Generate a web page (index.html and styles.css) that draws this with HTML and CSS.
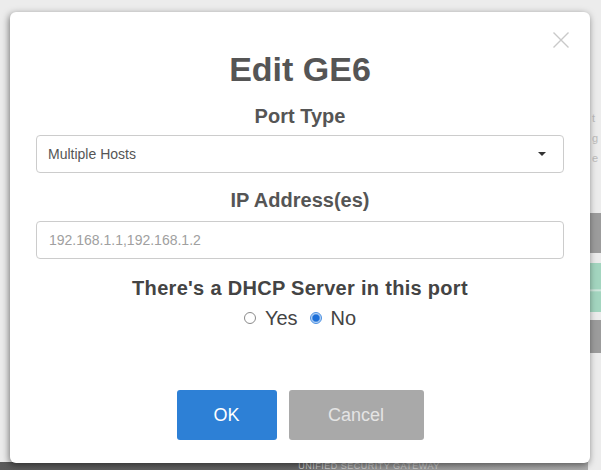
FILE: index.html
```html
<!DOCTYPE html>
<html lang="en">
<head>
    <meta charset="UTF-8">
    <meta name="viewport" content="width=device-width, initial-scale=1.0">
    <title>Edit GE6</title>
    <link rel="stylesheet" href="styles.css">
</head>
<body>
    <div class="page">
        <div class="page-main">
            <div class="footer-bar"><span class="footer-text">UNIFIED SECURITY GATEWAY</span></div>
        </div>
        <div class="page-side">
            <div class="side-text">t<br/>g<br/>e</div>
            <div class="side-block gray"></div>
            <div class="side-block green"></div>
            <div class="side-block gray short"></div>
        </div>
    </div>

    <div id="overlay"></div>

    <div id="popup" class="modal">
        <span class="close">
            <svg width="18" height="16" viewBox="0 0 18 16"><path d="M1.5 0.5 L16.5 15.5 M16.5 0.5 L1.5 15.5" stroke="#c9c9c9" stroke-width="1.4" fill="none"/></svg>
        </span>
        <h1 class="modal-title">Edit GE6</h1>

        <label class="field-label">Port Type</label>
        <div class="select-box">
            <span>Multiple Hosts</span>
            <span class="caret"></span>
        </div>

        <label class="field-label">IP Address(es)</label>
        <input class="text-input" type="text" placeholder="192.168.1.1,192.168.1.2">

        <div class="dhcp-label">There's a DHCP Server in this port</div>
        <div class="radio-row">
            <label class="radio"><span class="dot"></span>Yes</label>
            <label class="radio"><span class="dot checked"></span>No</label>
        </div>

        <div class="buttons">
            <button class="btn btn-ok">OK</button>
            <button class="btn btn-cancel">Cancel</button>
        </div>
    </div>
</body>
</html>
```

FILE: styles.css
```css
html, body {
    margin: 0;
    padding: 0;
}

body {
    width: 601px;
    height: 470px;
    overflow: hidden;
    background-color: #f4f4f4;
    font-family: "Liberation Sans", Arial, sans-serif;
    position: relative;
}

.page {
    display: flex;
    height: 470px;
}

.page-main {
    flex: 1;
    display: flex;
    flex-direction: column;
    justify-content: flex-end;
}

.footer-bar {
    height: 8px;
    background: linear-gradient(to right, #5e5e5e 0, #6b6b6b 300px, #9a9a9a 340px, #b5b5b5 100%);
    display: flex;
    justify-content: center;
}

.footer-text {
    font-size: 9px;
    color: #d8d8d8;
    margin-left: 150px;
    line-height: 8px;
    letter-spacing: 0.5px;
}

.page-side {
    width: 13px;
    display: flex;
    flex-direction: column;
    padding-top: 108px;
}

.side-text {
    font-size: 11px;
    line-height: 20px;
    color: #c4c4c4;
    padding-left: 4px;
    height: 105px;
}

.side-block {
    height: 40px;
    margin-bottom: 10px;
}

.side-block.gray {
    background-color: #a2a2a2;
}

.side-block.green {
    background: linear-gradient(#a9dcc6 0, #a9dcc6 26px, #e6f4ee 27px, #a9dcc6 29px);
    height: 49px;
    margin-bottom: 8px;
}

.side-block.short {
    height: 33px;
}

#overlay {
    position: absolute;
    top: 0;
    left: 0;
    width: 100%;
    height: 100%;
    background-color: rgba(0, 0, 0, 0.03);
}

.modal {
    position: absolute;
    top: 12px;
    left: 10px;
    width: 580px;
    box-sizing: border-box;
    padding: 37px 26px 23px;
    background-color: #fff;
    border-radius: 6px;
    box-shadow: -1px 2px 7px rgba(0, 0, 0, 0.5);
    display: flex;
    flex-direction: column;
    align-items: center;
}

.close {
    position: absolute;
    top: 20px;
    right: 20px;
    display: flex;
}

.modal-title {
    margin: 0;
    font-size: 34px;
    line-height: 40px;
    font-weight: bold;
    color: #555;
}

.field-label {
    margin-top: 15px;
    font-size: 20px;
    line-height: 24px;
    font-weight: bold;
    color: #555;
}

.select-box,
.text-input {
    width: 100%;
    height: 38px;
    box-sizing: border-box;
    border: 1px solid #ccc;
    border-radius: 4px;
    margin-top: 7px;
    font-family: "Liberation Sans", Arial, sans-serif;
}

.select-box {
    display: flex;
    align-items: center;
    justify-content: space-between;
    font-size: 14px;
    color: #555;
    padding: 0 17px 0 11px;
}

.caret {
    width: 0;
    height: 0;
    border-left: 4px solid transparent;
    border-right: 4px solid transparent;
    border-top: 4px solid #333;
}

.text-input {
    margin-top: 9px;
    padding: 0 12px;
    font-size: 14px;
    outline: none;
}

.text-input::placeholder {
    color: #a0a0a0;
}

.dhcp-label {
    margin-top: 17px;
    font-size: 20px;
    line-height: 24px;
    font-weight: bold;
    color: #444;
    letter-spacing: 0.3px;
}

.radio-row {
    display: flex;
    gap: 12px;
    margin-top: 6px;
    font-size: 20px;
    line-height: 24px;
    color: #444;
}

.radio {
    display: flex;
    align-items: center;
    gap: 9px;
}

.dot {
    width: 10px;
    height: 10px;
    border: 1px solid #8a8a8a;
    border-radius: 50%;
    box-sizing: content-box;
}

.dot.checked {
    border-color: #4a90e2;
    background: radial-gradient(circle, #1c6fd8 0, #1c6fd8 3px, #b9d4f4 4.5px);
}

.buttons {
    display: flex;
    gap: 12px;
    margin-top: 60px;
}

.btn {
    height: 50px;
    border: none;
    border-radius: 3px;
    font-family: "Liberation Sans", Arial, sans-serif;
    font-size: 18px;
}

.btn-ok {
    width: 100px;
    background-color: #2d80d6;
    color: #fff;
}

.btn-cancel {
    width: 135px;
    background-color: #a9a9a9;
    color: #e4e4e4;
}
```
